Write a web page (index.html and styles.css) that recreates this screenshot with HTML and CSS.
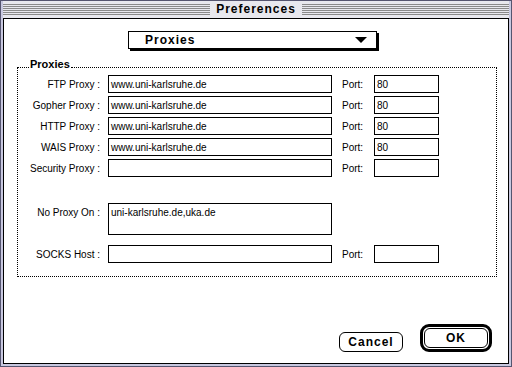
FILE: index.html
```html
<!DOCTYPE html>
<html lang="en">
<head>
    <meta charset="UTF-8">
    <title>Preferences</title>
    <link rel="stylesheet" href="styles.css">
</head>
<body>

<div class="window">
    <div class="titlebar">
        <span class="title">Preferences</span>
    </div>

    <div class="content">
        <div class="popup">
            <span>Proxies</span>
            <span class="arrow"></span>
        </div>

        <div class="group">
            <div class="group-head"><span class="group-title">Proxies</span></div>
            <div class="group-body">
                <label>FTP Proxy :</label>
                <div class="field">www.uni-karlsruhe.de</div>
                <label class="port-label">Port:</label>
                <div class="field port">80</div>

                <label>Gopher Proxy :</label>
                <div class="field">www.uni-karlsruhe.de</div>
                <label class="port-label">Port:</label>
                <div class="field port">80</div>

                <label>HTTP Proxy :</label>
                <div class="field">www.uni-karlsruhe.de</div>
                <label class="port-label">Port:</label>
                <div class="field port">80</div>

                <label>WAIS Proxy :</label>
                <div class="field">www.uni-karlsruhe.de</div>
                <label class="port-label">Port:</label>
                <div class="field port">80</div>

                <label>Security Proxy :</label>
                <div class="field"></div>
                <label class="port-label">Port:</label>
                <div class="field port"></div>

                <label class="noproxy-label">No Proxy On :</label>
                <div class="field noproxy">uni-karlsruhe.de,uka.de</div>

                <label class="socks">SOCKS Host :</label>
                <div class="field socks"></div>
                <label class="port-label socks">Port:</label>
                <div class="field port socks"></div>
            </div>
        </div>

        <div class="buttons">
            <button type="button" class="btn">Cancel</button>
            <div class="default-ring">
                <button type="button" class="btn">OK</button>
            </div>
        </div>
    </div>
</div>

</body>
</html>
```

FILE: styles.css
```css
* {
    box-sizing: border-box;
}

body {
    margin: 0;
    padding: 0;
    background-color: #fff;
    font-family: "Liberation Sans", Arial, sans-serif;
    font-size: 10px;
    color: #000;
}

.window {
    width: 512px;
    height: 367px;
    display: flex;
    flex-direction: column;
    background-color: #c8c8e0;
    border: 1px solid #555570;
    padding: 0 2px 2px 2px;
}

.titlebar {
    height: 17px;
    flex: none;
    display: flex;
    justify-content: center;
    align-items: center;
    padding: 3px 0 3px 0;
    background: repeating-linear-gradient(to bottom, #8a8a8a 0 1px, #e8e8ee 1px 2px) content-box, #e8e8ee;
}

.title {
    background-color: #e8e8ee;
    padding: 0 6px;
    font-weight: bold;
    font-size: 12px;
    letter-spacing: 1px;
    line-height: 13px;
}

.content {
    flex: 1;
    display: flex;
    flex-direction: column;
    background-color: #fff;
    border: 1px solid #000;
    padding: 12px 16px 11px 13px;
}

/* popup menu */
.popup {
    width: 249px;
    height: 18px;
    margin-left: 111px;
    display: flex;
    justify-content: space-between;
    align-items: center;
    padding: 0 9px 0 16px;
    border: 1px solid #000;
    box-shadow: 2px 2px 0 #000;
    font-weight: bold;
    font-size: 12px;
    letter-spacing: 1px;
}

.arrow {
    width: 0;
    height: 0;
    border-left: 6px solid transparent;
    border-right: 6px solid transparent;
    border-top: 6px solid #000;
}

/* group box */
.group {
    margin-top: 9px;
    width: 480px;
}

.group-head {
    display: flex;
    align-items: flex-end;
    height: 10px;
}

.group-head::before,
.group-head::after {
    content: "";
    border-bottom: 1px dotted #000;
}

.group-head::before {
    width: 12px;
}

.group-head::after {
    flex: 1;
}

.group-title {
    font-weight: bold;
    font-size: 11px;
    line-height: 11px;
    position: relative;
    top: 2px;
    padding: 0 1px;
}

.group-body {
    border: 1px dotted #000;
    border-top: none;
    display: grid;
    grid-template-columns: 90px 234px 32px 65px;
    grid-template-rows: repeat(5, 18px) auto auto;
    row-gap: 3px;
    align-items: center;
    padding: 7px 0 13px 0;
}

.group-body label {
    text-align: right;
    padding-right: 8px;
    white-space: nowrap;
}

.group-body .port-label {
    text-align: left;
    padding-right: 0;
}

.field {
    width: 224px;
    height: 18px;
    border: 1px solid #000;
    padding: 3px 2px 0 2px;
    line-height: 12px;
    white-space: nowrap;
}

.field.port {
    width: 65px;
}

.noproxy-label {
    grid-row: 6;
    grid-column: 1;
    align-self: start;
    margin-top: 23px;
    padding-top: 4px;
}

.field.noproxy {
    grid-row: 6;
    grid-column: 2;
    height: 32px;
    margin-top: 23px;
    align-self: start;
}

.socks {
    grid-row: 7;
    margin-top: 7px;
}

/* buttons */
.buttons {
    margin-top: auto;
    display: flex;
    justify-content: flex-end;
    align-items: flex-end;
    gap: 17px;
}

.btn {
    width: 64px;
    height: 20px;
    margin: 0;
    padding: 0;
    background-color: #fff;
    border: 1px solid #000;
    border-radius: 6px;
    font-family: "Liberation Sans", Arial, sans-serif;
    font-weight: bold;
    font-size: 12px;
    letter-spacing: 1px;
    color: #000;
}

.default-ring {
    border: 3px solid #000;
    border-radius: 9px;
    padding: 1px;
    display: flex;
}
```
